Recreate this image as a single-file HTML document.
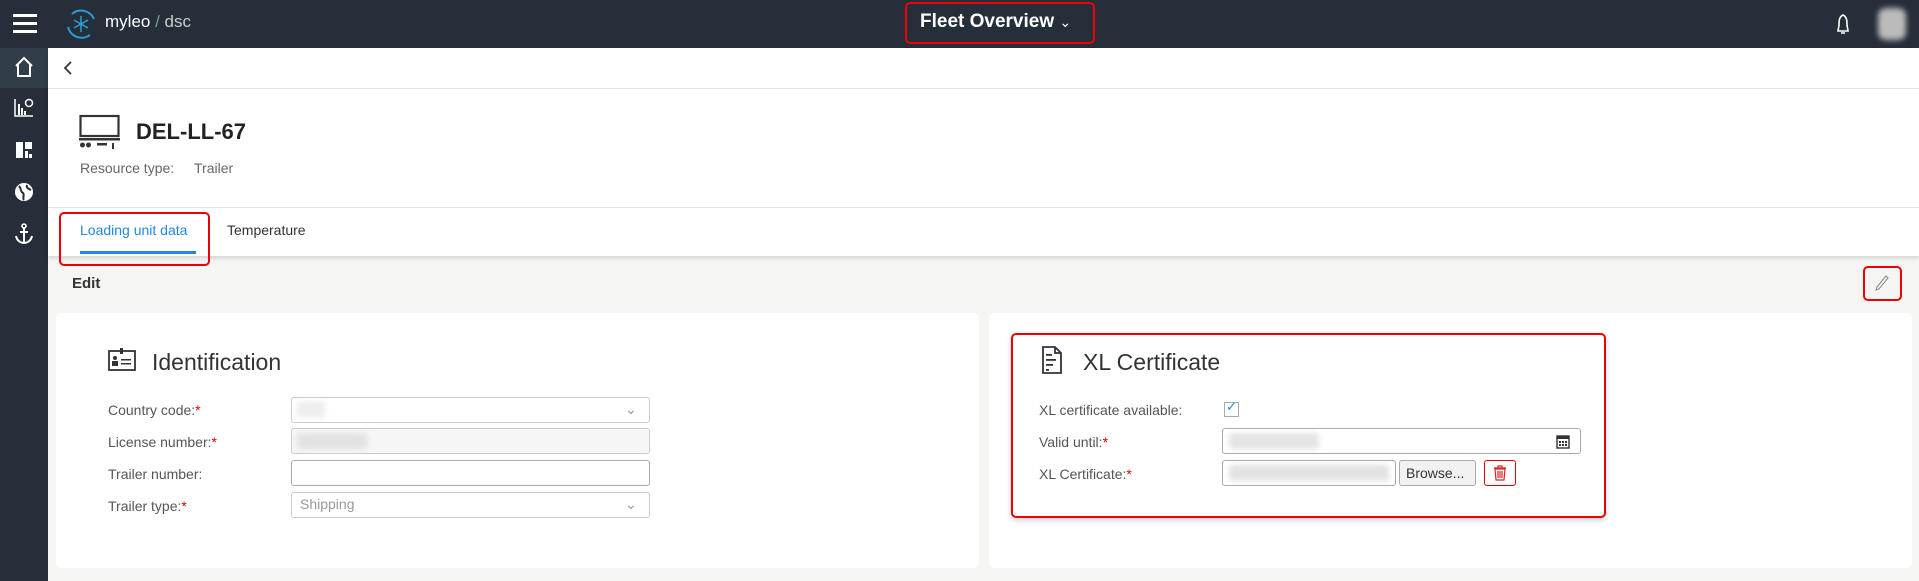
<!DOCTYPE html>
<html><head><meta charset="utf-8"><style>
*{box-sizing:border-box;margin:0;padding:0}
body{width:1919px;height:581px;overflow:hidden;background:#f5f5f3;font-family:"Liberation Sans",sans-serif;color:#333;position:relative}
.a{position:absolute}
.hdr{left:0;top:0;width:1919px;height:48px;background:#252e39}
.side{left:0;top:48px;width:48px;height:533px;background:#252e39}
.lbl{font-size:14px;color:#555}
.req{color:#d00}
.inp{position:absolute;height:26px;border:1px solid #ccc;border-radius:3px;background:#fff}
.blur{position:absolute;background:#ddd;filter:blur(3px);border-radius:3px}
</style></head><body>
<div class="a hdr"></div>
<!-- hamburger -->
<div class="a" style="left:13px;top:14px;width:24px;height:3px;background:#fff"></div>
<div class="a" style="left:13px;top:22px;width:24px;height:3px;background:#fff"></div>
<div class="a" style="left:13px;top:30px;width:24px;height:3px;background:#fff"></div>
<svg class="a" style="left:64px;top:7px" width="34" height="34" viewBox="0 0 34 34"><path d="M8 7 A14 14 0 0 1 30 12 M26 28 A14 14 0 0 1 4 20" stroke="#2a9fd8" stroke-width="2" fill="none"/><g stroke="#2a9fd8" stroke-width="1.5"><line x1="17" y1="9" x2="17" y2="25"/><line x1="10" y1="13" x2="24" y2="21"/><line x1="10" y1="21" x2="24" y2="13"/></g></svg>
<div class="a" style="left:105px;top:12px;font-size:17px;color:#fff">myleo<span style="color:#8a96a3"> / </span><span style="color:#ccc">dsc</span></div>
<div class="a" style="left:905px;top:2px;width:190px;height:42px;border:2px solid #e00;border-radius:5px"></div>
<div class="a" style="left:920px;top:11px;font-size:19px;color:#fff;font-weight:bold">Fleet Overview <span style="font-weight:normal;font-size:14px">&#8964;</span></div>
<svg class="a" style="left:1832px;top:13px" width="22" height="24" viewBox="0 0 22 24"><path d="M11 2 C7 4 7 8 7 12 L6 18 L16 18 L15 12 C15 8 15 4 11 2Z M9 20 L13 20" stroke="#fff" stroke-width="1.6" fill="none"/></svg>
<div class="a" style="left:1878px;top:8px;width:28px;height:32px;background:#bbb;filter:blur(3px);border-radius:8px"></div>

<div class="a side"></div>
<div class="a" style="left:0;top:48px;width:48px;height:40px;background:#323d4a"></div>
<svg class="a" style="left:12px;top:55px" width="24" height="24" viewBox="0 0 24 24"><path d="M4 11 L12 3 L20 11 M6 9 V21 H18 V9" stroke="#fff" stroke-width="2" fill="none"/></svg>
<svg class="a" style="left:14px;top:98px" width="20" height="20" viewBox="0 0 20 20"><path d="M1 1V18H19" stroke="#fff" stroke-width="1.5" fill="none"/><rect x="4" y="6" width="2" height="11" fill="#fff"/><rect x="7" y="10" width="2" height="7" fill="#fff"/><rect x="10" y="13" width="2" height="4" fill="#fff"/><circle cx="15" cy="5" r="3.5" stroke="#fff" stroke-width="1.5" fill="none"/></svg>
<svg class="a" style="left:15px;top:141px" width="18" height="18" viewBox="0 0 18 18"><rect x="1" y="1" width="7" height="16" fill="#fff"/><rect x="10" y="1" width="7" height="7" fill="#fff"/><rect x="10" y="10" width="3" height="7" fill="#fff"/><rect x="14" y="13" width="3" height="4" fill="#fff"/></svg>
<svg class="a" style="left:13px;top:181px" width="22" height="22" viewBox="0 0 22 22"><circle cx="11" cy="11" r="9" fill="#fff"/><path d="M6 5 C9 8 7 11 10 12 C12 14 9 17 11 19 M14 4 C13 7 16 8 18 9" stroke="#252e39" stroke-width="2" fill="none"/></svg>
<svg class="a" style="left:13px;top:222px" width="22" height="24" viewBox="0 0 22 24"><circle cx="11" cy="4" r="2" stroke="#fff" stroke-width="1.6" fill="none"/><path d="M11 6 V21 M7 10 H15 M3 14 C4 19 8 21 11 21 C14 21 18 19 19 14" stroke="#fff" stroke-width="2" fill="none"/></svg>

<!-- top white area -->
<div class="a" style="left:48px;top:48px;width:1871px;height:208px;background:#fff;box-shadow:0 2px 4px rgba(0,0,0,.15)"></div>
<div class="a" style="left:48px;top:88px;width:1871px;height:1px;background:#e3e3e3"></div>
<div class="a" style="left:48px;top:207px;width:1871px;height:1px;background:#e3e3e3"></div>
<svg class="a" style="left:62px;top:60px" width="12" height="16" viewBox="0 0 12 16"><path d="M9 2 L3 8 L9 14" stroke="#333" stroke-width="1.8" fill="none"/></svg>
<svg class="a" style="left:79px;top:114px" width="42" height="36" viewBox="0 0 42 36"><rect x="1.5" y="2" width="38" height="20" stroke="#333" stroke-width="2.2" fill="none"/><rect x="0" y="24" width="41" height="2.5" fill="#333"/><circle cx="3.5" cy="31" r="2.5" fill="#333"/><circle cx="9.5" cy="31" r="2.5" fill="#333"/><rect x="18" y="29" width="10" height="2.5" fill="#333"/><rect x="33" y="29" width="2" height="6" fill="#333"/></svg>
<div class="a" style="left:136px;top:119px;font-size:22px;font-weight:bold;color:#222">DEL-LL-67</div>
<div class="a" style="left:80px;top:160px;font-size:14px;color:#666">Resource type:</div>
<div class="a" style="left:194px;top:160px;font-size:14px;color:#666">Trailer</div>
<div class="a" style="left:80px;top:222px;font-size:14px;color:#1e88e5">Loading unit data</div>
<div class="a" style="left:80px;top:251px;width:116px;height:3px;background:#1e88e5"></div>
<div class="a" style="left:227px;top:222px;font-size:14px;color:#333">Temperature</div>
<div class="a" style="left:59px;top:212px;width:151px;height:54px;border:2px solid #e00;border-radius:5px"></div>

<div class="a" style="left:72px;top:275px;font-size:15px;font-weight:bold;color:#333">Edit</div>
<div class="a" style="left:1863px;top:266px;width:39px;height:35px;border:2px solid #e00;border-radius:5px;background:#f5f5f3"></div>
<svg class="a" style="left:1874px;top:274px" width="16" height="18" viewBox="0 0 16 18"><path d="M12 2 L14 4 L5 15 L2 16 L3 13 Z" stroke="#888" stroke-width="1" fill="none"/></svg>

<!-- cards -->
<div class="a" style="left:56px;top:313px;width:923px;height:255px;background:#fff;border-radius:5px"></div>
<div class="a" style="left:989px;top:313px;width:923px;height:255px;background:#fff;border-radius:5px"></div>

<svg class="a" style="left:108px;top:347px" width="28" height="24" viewBox="0 0 28 24"><rect x="1" y="4" width="26" height="19" stroke="#333" stroke-width="1.8" fill="none"/><rect x="12" y="1" width="3" height="6" fill="#333"/><circle cx="7" cy="11" r="2" fill="#333"/><rect x="4" y="14" width="6" height="5" fill="#333"/><rect x="13" y="12" width="10" height="1.5" fill="#333"/><rect x="13" y="16" width="10" height="1.5" fill="#333"/></svg>
<div class="a" style="left:152px;top:349px;font-size:23px;color:#333">Identification</div>
<div class="a lbl" style="left:108px;top:402px">Country code:<span class="req">*</span></div>
<div class="a lbl" style="left:108px;top:434px">License number:<span class="req">*</span></div>
<div class="a lbl" style="left:108px;top:466px">Trailer number:</div>
<div class="a lbl" style="left:108px;top:498px">Trailer type:<span class="req">*</span></div>
<div class="inp" style="left:291px;top:397px;width:359px"></div>
<div class="blur" style="left:297px;top:401px;width:28px;height:17px;background:#eee"></div>
<div class="a" style="left:625px;top:401px;font-size:14px;color:#999">&#8964;</div>
<div class="inp" style="left:291px;top:428px;width:359px;background:#f6f6f6"></div>
<div class="blur" style="left:297px;top:433px;width:70px;height:16px;background:#e2e2e2"></div>
<div class="inp" style="left:291px;top:460px;width:359px;border-color:#aaa"></div>
<div class="inp" style="left:291px;top:492px;width:359px"></div>
<div class="a" style="left:300px;top:496px;font-size:14px;color:#999">Shipping</div>
<div class="a" style="left:625px;top:496px;font-size:14px;color:#999">&#8964;</div>

<div class="a" style="left:1011px;top:333px;width:595px;height:185px;border:2px solid #e00;border-radius:5px;box-shadow:0 2px 6px rgba(0,0,0,.2)"></div>
<svg class="a" style="left:1041px;top:345px" width="22" height="30" viewBox="0 0 22 30"><path d="M2 2 H14 L20 8 V28 H2 Z M14 2 V8 H20" stroke="#333" stroke-width="1.8" fill="none"/><rect x="5" y="9" width="6" height="1.8" fill="#333"/><rect x="5" y="14" width="10" height="1.8" fill="#333"/><rect x="5" y="19" width="7" height="1.8" fill="#333"/><rect x="5" y="24" width="3" height="1.8" fill="#333"/></svg>
<div class="a" style="left:1083px;top:349px;font-size:23px;color:#333">XL Certificate</div>
<div class="a lbl" style="left:1039px;top:402px">XL certificate available:</div>
<div class="a lbl" style="left:1039px;top:434px">Valid until:<span class="req">*</span></div>
<div class="a lbl" style="left:1039px;top:466px">XL Certificate:<span class="req">*</span></div>
<div class="a" style="left:1224px;top:402px;width:15px;height:15px;border:1px solid #aaa;background:#fff"></div>
<div class="a" style="left:1226px;top:399px;font-size:13px;color:#1e88e5">&#10003;</div>
<div class="inp" style="left:1222px;top:428px;width:359px;border-color:#aaa"></div>
<div class="blur" style="left:1229px;top:433px;width:90px;height:16px;background:#e4e4e4"></div>
<svg class="a" style="left:1556px;top:433px" width="14" height="16" viewBox="0 0 14 16"><rect x="1" y="3" width="12" height="12" stroke="#333" stroke-width="1.4" fill="none"/><rect x="1" y="3" width="12" height="3" fill="#333"/><g fill="#333"><rect x="3" y="8" width="2" height="2"/><rect x="6" y="8" width="2" height="2"/><rect x="9" y="8" width="2" height="2"/><rect x="3" y="11" width="2" height="2"/><rect x="6" y="11" width="2" height="2"/><rect x="9" y="11" width="2" height="2"/></g></svg>
<div class="inp" style="left:1222px;top:460px;width:174px;border-color:#aaa"></div>
<div class="blur" style="left:1229px;top:465px;width:160px;height:16px;background:#e2e2e2"></div>
<div class="inp" style="left:1399px;top:460px;width:77px;background:#f2f2f2;border-color:#aaa;font-size:14px;color:#333;padding:4px 0 0 6px">Browse...</div>
<div class="inp" style="left:1484px;top:460px;width:32px;border-color:#d00"></div>
<svg class="a" style="left:1492px;top:465px" width="16" height="16" viewBox="0 0 16 16"><path d="M2 3 H14 M6 3 V1 H10 V3 M3 4 L4 15 H12 L13 4 Z M6 6 V13 M8 6 V13 M10 6 V13" stroke="#d22" stroke-width="1.2" fill="none"/></svg>
</body></html>
